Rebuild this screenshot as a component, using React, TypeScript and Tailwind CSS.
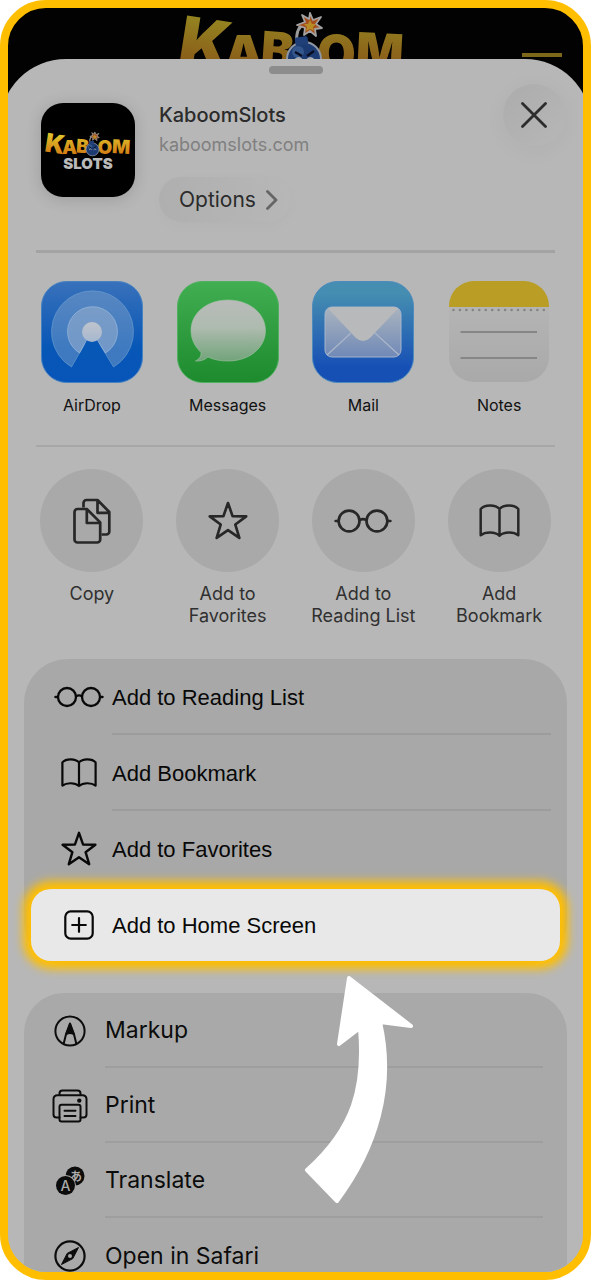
import React from 'react';

interface IconProps {
  className?: string;
}

const GlassesIcon: React.FC<IconProps> = ({ className }) => (
  <svg viewBox="0 0 50 24" fill="none" stroke="currentColor" strokeWidth="2.3" strokeLinecap="round" className={className} aria-hidden="true">
    <circle cx="13" cy="12" r="9" />
    <circle cx="37" cy="12" r="9" />
    <path d="M22 11.2q3-1.6 6 0M1.4 12h2.2M46.4 12h2.2" />
  </svg>
);

const BookIcon: React.FC<IconProps> = ({ className }) => (
  <svg viewBox="0 0 36 30" fill="none" stroke="currentColor" strokeWidth="2.2" strokeLinejoin="round" strokeLinecap="round" className={className} aria-hidden="true">
    <path d="M18 4.4C14.5.4 5 .2 1.4 4.4v23.2c4.2-3.2 12.6-3.2 16.6.4 4-3.600 12.400-3.600 16.600-.4V4.400C31 .2 21.500.4 18 4.400ZM18 4.400V28" />
  </svg>
);

const StarIcon: React.FC<IconProps> = ({ className }) => (
  <svg viewBox="0 0 36 36" fill="none" stroke="currentColor" strokeWidth="2.4" strokeLinejoin="round" className={className} aria-hidden="true">
    <path d="M18 1.800 22.100 13.600 34.400 13.800 24.600 21.200 28.200 33.200 18 26.200 7.800 33.200 11.400 21.200 1.600 13.800 13.900 13.600Z" />
  </svg>
);

const CopyIcon: React.FC<IconProps> = ({ className }) => (
  <svg viewBox="0 0 38 46" fill="none" stroke="currentColor" strokeWidth="2.700" strokeLinejoin="round" className={className} aria-hidden="true">
    <path d="M10.500 9.500V5a3 3 0 0 1 3-3H24.500L36.300 14V33.500a3 3 0 0 1-3 3H28.500M24.500 2V14.800H36.300" />
    <path d="M4.500 11H13.800L27.200 24.400V41.500a3 3 0 0 1-3 3H4.500a3 3 0 0 1-3-3V14a3 3 0 0 1 3-3ZM13.800 11V25H27.200" />
  </svg>
);

const PlusSquareIcon: React.FC<IconProps> = ({ className }) => (
  <svg viewBox="0 0 30 30" fill="none" stroke="currentColor" strokeWidth="2.200" strokeLinecap="round" className={className} aria-hidden="true">
    <rect x="1.300" y="1.300" width="27.400" height="27.400" rx="5.500" />
    <path d="M15 8.200v13.600M8.200 15h13.600" />
  </svg>
);

const MarkupIcon: React.FC<IconProps> = ({ className }) => (
  <svg viewBox="0 0 32 32" fill="none" stroke="currentColor" strokeWidth="2" strokeLinejoin="round" className={className} aria-hidden="true">
    <circle cx="16" cy="16" r="14.600" />
    <path d="M9.600 29 12.200 18.500 16 9l3.800 9.500L22.400 29M12.200 18.500Q16 17 19.800 18.500" />
    <path d="M16 8.500 12.500 18.800Q16 17 19.500 18.800Z" fill="currentColor" />
  </svg>
);

const PrintIcon: React.FC<IconProps> = ({ className }) => (
  <svg viewBox="0 0 36 34" fill="none" stroke="currentColor" strokeWidth="2" strokeLinejoin="round" strokeLinecap="round" className={className} aria-hidden="true">
    <path d="M7.500 6V4.500a3 3 0 0 1 3-3h15a3 3 0 0 1 3 3V6" />
    <path d="M7.500 28.500H4.500a3 3 0 0 1-3-3V10a3.800 3.800 0 0 1 3.800-3.800h25.400A3.800 3.800 0 0 1 34.500 10v15.500a3 3 0 0 1-3 3H28.500" />
    <rect x="7.500" y="15.800" width="21" height="16.800" rx="2" />
    <path d="M12.500 21.700h11M12.500 27h11" />
    <circle cx="27.300" cy="11.600" r="1.200" fill="currentColor" />
  </svg>
);

const TranslateIcon: React.FC<IconProps> = ({ className }) => (
  <svg viewBox="0 0 30 30" className={className} aria-hidden="true">
    <circle cx="20" cy="10" r="9.500" fill="#0c0c0c" />
    <text x="21" y="14.500" textAnchor="middle" fontSize="12" fontWeight="700" fill="#a9a9a9" className="font-['Noto_Sans_CJK_JP',sans-serif]">あ</text>
    <circle cx="10.500" cy="19.500" r="10.500" fill="#a9a9a9" />
    <circle cx="10.500" cy="19.500" r="9.500" fill="#0c0c0c" />
    <text x="10.500" y="24.500" textAnchor="middle" fontSize="14" fontWeight="500" fill="#a9a9a9">A</text>
  </svg>
);

const SafariIcon: React.FC<IconProps> = ({ className }) => (
  <svg viewBox="0 0 32 32" className={className} aria-hidden="true">
    <circle cx="16" cy="16" r="14.600" fill="none" stroke="currentColor" strokeWidth="2.200" />
    <path d="M24.500 7.500 13.200 13.400 7.500 24.500 18.800 18.600Z" fill="currentColor" stroke="currentColor" strokeLinejoin="round" />
    <circle cx="16" cy="16" r="2" fill="#a9a9a9" />
  </svg>
);

const Bomb: React.FC = () => (
  <g>
    <path d="M118 34q-2-14 9-20" fill="none" stroke="#9a9a9a" strokeWidth="3" />
    <path d="m131 5 3 7 8-3-5 7 6 4-7 1 1 7-6-5-6 4 1-7-8-3 8-3-3-7 7 4Z" fill="#a54e1e" stroke="#a2a2a2" strokeWidth="1.800" strokeLinejoin="round" />
    <path d="m131 12 2 4 4 0-3 3 1 4-4-2-4 2 1-4-3-3 4 0Z" fill="#b78c25" />
    <circle cx="125" cy="51" r="17" fill="#1d3b73" stroke="#8d96a2" strokeWidth="2" />
    <rect x="116" y="29" width="13" height="8" rx="2" fill="#203e77" transform="rotate(-8 122 33)" />
    <circle cx="119" cy="44" r="6" fill="#42699c" opacity=".6" />
    <path d="m116 44 7 4M135 43l-7 5" stroke="#080e20" strokeWidth="2.500" />
    <path d="M116 52q4-4 7 0M128 52q3-4 7 0" fill="none" stroke="#a5a9b0" strokeWidth="2" />
  </g>
);

// the word mark, shared by the site header and the app icon
const Kaboom: React.FC<{ id: string; from: string; to: string }> = ({ id, from, to }) => (
  <g>
    <defs>
      <linearGradient id={id} gradientUnits="userSpaceOnUse" x1="0" y1="10" x2="0" y2="66">
        <stop offset="0" stopColor={from} />
        <stop offset="1" stopColor={to} />
      </linearGradient>
    </defs>
    <g fill={`url(#${id})`} fontWeight="900" className="font-[Inter,sans-serif]">
      <text x="0" y="59" fontSize="68" transform="rotate(9 20 40)">K</text>
      <text x="45" y="63" fontSize="50">A</text>
      <text x="82" y="60" fontSize="50" transform="rotate(4 95 40)">B</text>
      <text x="138" y="63" fontSize="50">O</text>
      <text x="177" y="61" fontSize="50" transform="rotate(3 190 40)">M</text>
    </g>
    <Bomb />
  </g>
);

const AppLogo: React.FC = () => (
  <svg viewBox="0 0 94 94" className="size-[94px] shrink-0 mt-[19px] rounded-[22px] bg-black shadow-[0_2px_16px_rgba(0,0,0,0.15)]" role="img" aria-label="Kaboom Slots">
    <g transform="translate(4 27) scale(.38)">
      <Kaboom id="iconGold" from="#dfc52c" to="#d27813" />
    </g>
    <text x="47" y="66" textAnchor="middle" fontSize="15" fontWeight="900" fill="#bababa" className="font-[Inter,sans-serif]">SLOTS</text>
  </svg>
);

const AirDropArt: React.FC = () => (
  <svg viewBox="0 0 102 102" className="size-[102px]" aria-hidden="true">
    <defs>
      <linearGradient id="airBg" x2="0" y2="1"><stop stopColor="#3971ba" /><stop offset=".65" stopColor="#0757b7" /><stop offset="1" stopColor="#0755b8" /></linearGradient>
      <linearGradient id="airDot" x2="0" y2="1"><stop stopColor="#bfc4cc" /><stop offset="1" stopColor="#a6b7d0" /></linearGradient>
    </defs>
    <rect x=".5" y=".5" width="101" height="101" rx="25" fill="url(#airBg)" stroke="#4682c2" />
    <path d="M30.500 86A41 41 0 1 1 72.500 86L56 59H46Z" fill="#8cacce" fillOpacity=".42" stroke="#6c9ece" strokeOpacity=".6" />
    <path d="M38.500 72A25 25 0 1 1 64.500 72L56 59H46Z" fill="#9ab1cd" fillOpacity=".55" stroke="#a3c1df" strokeOpacity=".6" />
    <path d="M46 59H56L66 78H37Z" fill="#0757b7" />
    <circle cx="51" cy="51" r="10" fill="url(#airDot)" />
  </svg>
);

const MessagesArt: React.FC = () => (
  <svg viewBox="0 0 102 102" className="size-[102px]" aria-hidden="true">
    <defs>
      <linearGradient id="msgBg" x2="0" y2="1"><stop stopColor="#40ae51" /><stop offset="1" stopColor="#1d8a2e" /></linearGradient>
      <linearGradient id="msgBubble" x2="0" y2="1"><stop stopColor="#b9bbb9" /><stop offset=".45" stopColor="#aebbaf" /><stop offset="1" stopColor="#72a47a" /></linearGradient>
    </defs>
    <rect x=".5" y=".5" width="101" height="101" rx="25" fill="url(#msgBg)" stroke="#4eb15d" />
    <path d="M51 19C30 19 14 32 14 49.500c0 10 5 17 10 22 .5 4-2 6.500-5.500 8.500 5 .5 9-1 12.500-4 5.500 2.700 12 4 20 4 21 0 37.500-13 37.500-30.500S72 19 51 19Z" fill="url(#msgBubble)" stroke="#9fc2a3" strokeOpacity=".6" />
  </svg>
);

const MailArt: React.FC = () => (
  <svg viewBox="0 0 102 102" className="size-[102px]" aria-hidden="true">
    <defs>
      <linearGradient id="mailBg" x2="0" y2="1"><stop offset=".12" stopColor="#458db1" /><stop offset=".85" stopColor="#1750b5" /></linearGradient>
      <linearGradient id="mailBody" x2="0" y2="1"><stop stopColor="#aab4be" /><stop offset="1" stopColor="#7089b7" /></linearGradient>
    </defs>
    <rect x=".5" y=".5" width="101" height="101" rx="25" fill="url(#mailBg)" stroke="#4d8bbd" />
    <rect x="13" y="26" width="76" height="50" rx="7" fill="url(#mailBody)" stroke="#a5b5cc" />
    <path d="M15 74 39 52M87 74 63 52" stroke="#aab6ca" strokeWidth="1.200" />
    <path d="M16 27.500Q18 26 21 26H81Q84 26 86 27.500L58 57Q51 63 44 57Z" fill="#b8b9bb" />
  </svg>
);

const NotesArt: React.FC = () => (
  <svg viewBox="0 0 102 102" className="size-[102px]" aria-hidden="true">
    <defs>
      <linearGradient id="notesBg" x2="0" y2="1"><stop stopColor="#b8b8b8" /><stop offset="1" stopColor="#a9a9a9" /></linearGradient>
      <clipPath id="notesClip"><rect x="1" y="0" width="100" height="101" rx="25" /></clipPath>
    </defs>
    <g clipPath="url(#notesClip)">
      <rect width="102" height="102" fill="url(#notesBg)" />
      <rect width="102" height="26" fill="#b99d24" />
      <path d="M5.500 29H98" stroke="#858585" strokeWidth="2.600" strokeLinecap="round" strokeDasharray="0 6.450" />
      <path d="M12.500 51H89M12.500 77H89" stroke="#868686" strokeWidth="1.800" />
    </g>
  </svg>
);

const apps = [
  { label: 'AirDrop', art: <AirDropArt /> },
  { label: 'Messages', art: <MessagesArt /> },
  { label: 'Mail', art: <MailArt /> },
  { label: 'Notes', art: <NotesArt /> },
];

const shortcuts = [
  { lines: ['Copy'], icon: <CopyIcon className="w-[38px] h-[46px]" /> },
  { lines: ['Add to', 'Favorites'], icon: <StarIcon className="size-10" /> },
  { lines: ['Add to', 'Reading List'], icon: <GlassesIcon className="w-[58px] h-7" /> },
  { lines: ['Add', 'Bookmark'], icon: <BookIcon className="w-[41px] h-[34px]" /> },
];

const pageActions = [
  { label: 'Add to Reading List', icon: <GlassesIcon className="w-[50px] h-6" /> },
  { label: 'Add Bookmark', icon: <BookIcon className="w-9 h-[30px]" /> },
  { label: 'Add to Favorites', icon: <StarIcon className="size-9" /> },
];

const moreActions = [
  { label: 'Markup', icon: <MarkupIcon className="size-8" /> },
  { label: 'Print', icon: <PrintIcon className="w-9 h-[34px]" /> },
  { label: 'Translate', icon: <TranslateIcon className="size-[30px]" /> },
  { label: 'Open in Safari', icon: <SafariIcon className="size-8" /> },
];

const App: React.FC = () => {
  return (
    <div className="h-screen bg-white font-[Inter,'Liberation_Sans',sans-serif]">
      <div className="h-full overflow-hidden rounded-[46px] border-8 border-[#ffbf00] bg-linear-to-b from-[#020202] from-50% to-[#b7b7b7] to-50%">
        <header className="relative h-[51px] flex justify-center">
          <svg viewBox="0 0 233 51" className="w-[233px] h-[51px]" role="img" aria-label="Kaboom">
            <Kaboom id="headerGold" from="#948320" to="#875318" />
          </svg>
          <button type="button" aria-label="Menu" className="absolute right-[21px] bottom-0.5 w-10 h-1 bg-[#7d6719]"></button>
        </header>

        {/* Share sheet */}
        <main className="-mx-2 px-6 pt-[7px] pb-10 rounded-t-[66px] bg-[#b7b7b7]">
          <div className="mx-auto w-[54px] h-2 rounded-full bg-[#8c8c8c]"></div>

          <section className="mx-3 mt-2.5 h-[169px] flex items-start border-b-3 border-[#a3a3a3]">
            <div className="pl-[5px]">
              <AppLogo />
            </div>
            <div className="ml-6 mt-[19px] flex-1">
              <h1 className="text-xl leading-6 font-medium text-[#2b2b2b]">KaboomSlots</h1>
              <p className="mt-1.5 text-lg leading-6 text-[#808080]">kaboomslots.com</p>
              <button type="button" className="mt-5 h-[45px] pl-5 pr-3 flex items-center gap-2.5 rounded-full text-[21px] text-[#2b2b2b] bg-linear-to-r from-[#afafaf] to-[#b7b7b7] shadow-[0_4px_16px_rgba(0,0,0,0.02)]">
                Options
                <svg viewBox="0 0 12 20" className="w-3 h-5" fill="none" stroke="#656565" strokeWidth="2.800" strokeLinecap="round" strokeLinejoin="round" aria-hidden="true">
                  <path d="m1.500 1.500 8.500 8.500-8.500 8.500" />
                </svg>
              </button>
            </div>
            <button type="button" aria-label="Close" className="-mr-2.5 size-[62px] flex items-center justify-center rounded-full bg-linear-to-br from-[#acacac] to-[#b7b7b7] shadow-[0_4px_24px_rgba(0,0,0,0.04)]">
              <svg viewBox="0 0 26 26" className="size-[26px]" stroke="#2c2c2c" strokeWidth="2.800" strokeLinecap="round" aria-hidden="true">
                <path d="m1.500 1.500 23 23M24.500 1.500l-23 23" />
              </svg>
            </button>
          </section>

          <section className="pt-7 grid grid-cols-4">
            {apps.map((app) => (
              <button key={app.label} type="button" className="flex flex-col items-center gap-3 text-base leading-5 text-[#111]">
                {app.art}
                {app.label}
              </button>
            ))}
          </section>

          <div className="mx-3 mt-[30px] h-0.5 bg-[#a7a7a7]"></div>

          <section className="mt-[22px] grid grid-cols-4">
            {shortcuts.map((item) => (
              <button key={item.lines.join(' ')} type="button" className="flex flex-col items-center gap-[11px] text-lg leading-[22px] text-[#303030]">
                <span className="size-[103px] flex items-center justify-center rounded-full bg-[#a9a9a9] text-[#272727]">
                  {item.icon}
                </span>
                <span className="flex flex-col items-center">
                  {item.lines.map((line) => (
                    <span key={line}>{line}</span>
                  ))}
                </span>
              </button>
            ))}
          </section>

          <ul className="mt-8 pb-1 rounded-[44px] bg-[#a8a8a8] font-['Liberation_Sans',Arial,sans-serif] text-[22px] text-[#080808]">
            {pageActions.map((action, i) => (
              <li key={action.label}>
                <button type="button" className="w-full h-[76px] pl-[30px] pr-4 flex items-center gap-2 text-left">
                  <span className="w-[50px] flex justify-center">{action.icon}</span>
                  <span className={i < 2 ? 'h-full flex-1 pt-0.5 flex items-center border-b-2 border-[#9c9c9c]' : 'flex-1'}>
                    {action.label}
                  </span>
                </button>
              </li>
            ))}
            <li className="pt-0.5 px-[7px]">
              <button type="button" className="w-full h-[72px] pl-[23px] pr-4 flex items-center gap-2 rounded-[20px] bg-[#e8e8e8] text-left shadow-[0_0_10px_8px_#ffbf00]">
                <span className="w-[50px] flex justify-center"><PlusSquareIcon className="size-[30px]" /></span>
                Add to Home Screen
              </button>
            </li>
          </ul>

          <div className="relative mt-7">
            <ul className="rounded-t-[40px] bg-[#a9a9a9] text-[23px] text-[#0c0c0c]">
              {moreActions.map((action) => (
                <li key={action.label} className="group">
                  <button type="button" className="w-full h-[75px] pl-7 pr-6 flex items-center gap-[17px] text-left">
                    <span className="w-9 flex justify-center">{action.icon}</span>
                    <span className="h-full flex-1 pt-0.5 flex items-center border-b-2 border-[#9e9e9e] group-last:border-0">
                      {action.label}
                    </span>
                  </button>
                </li>
              ))}
            </ul>

            {/* Pointer to the highlighted row */}
            <svg viewBox="0 0 112 232" className="absolute left-1/2 -top-5 ml-2 w-28 h-[232px] pointer-events-none" aria-hidden="true">
              <path
                d="M45 5 107 53 76 49C91 114 72 176 33 228L3 197C50 155 61 114 56 55L35 71Z"
                fill="#fff"
                stroke="#fff"
                strokeWidth="4"
                strokeLinejoin="round"
              />
            </svg>
          </div>
        </main>
      </div>
    </div>
  );
};

export default App;
